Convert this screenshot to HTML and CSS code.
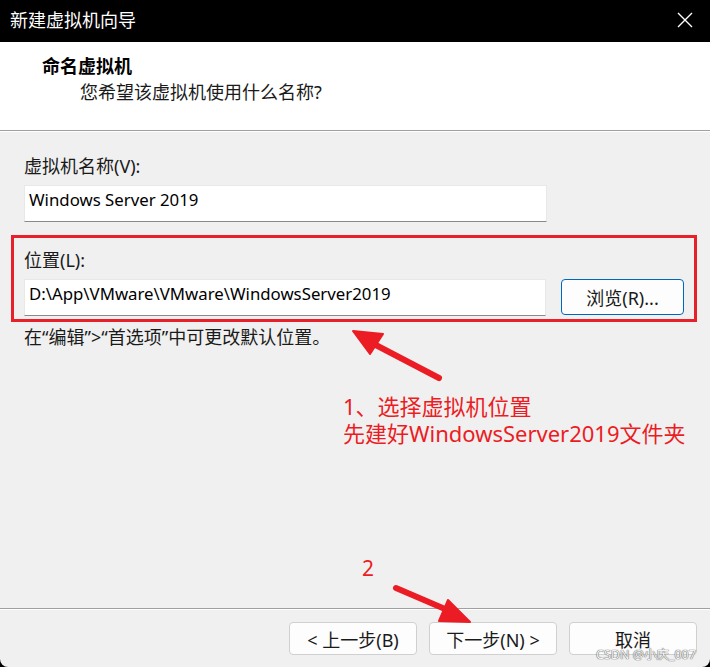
FILE: index.html
```html
<!DOCTYPE html>
<html lang="zh-CN">
<head>
  <meta charset="UTF-8">
  <title>新建虚拟机向导</title>
  <link rel="stylesheet" href="styles.css">
</head>
<body>
  <div class="window">
    <div class="titlebar">
      <span class="title">新建虚拟机向导</span>
      <svg class="close" width="16" height="16" viewBox="0 0 16 16">
        <path d="M1 1 L15 15 M15 1 L1 15" stroke="#fff" stroke-width="1.4" fill="none"/>
      </svg>
    </div>

    <div class="header">
      <div class="header-title">命名虚拟机</div>
      <div class="header-sub">您希望该虚拟机使用什么名称?</div>
    </div>

    <div class="content">
      <div class="label">虚拟机名称(V):</div>
      <div class="input name-input">Windows Server 2019</div>

      <div class="location-box">
        <div class="label">位置(L):</div>
        <div class="location-row">
          <div class="input path-input">D:\App\VMware\VMware\WindowsServer2019</div>
          <button class="btn btn-browse">浏览(R)...</button>
        </div>
      </div>

      <div class="hint">在“编辑”&gt;“首选项”中可更改默认位置。</div>
    </div>

    <div class="footer">
      <button class="btn">&lt; 上一步(B)</button>
      <button class="btn">下一步(N) &gt;</button>
      <button class="btn">取消</button>
    </div>

    <!-- annotations drawn over the dialog -->
    <div class="note">1、选择虚拟机位置<br>先建好WindowsServer2019文件夹</div>
    <div class="step">2</div>
    <svg class="arrows" width="710" height="667" viewBox="0 0 710 667">
      <g fill="#ec1c24" stroke="#ec1c24" stroke-linecap="round" stroke-linejoin="round">
        <line x1="439" y1="378" x2="370" y2="342" stroke-width="6"/>
        <polygon points="353,331 383,334 370,354" stroke-width="2"/>
        <line x1="396" y1="588" x2="452" y2="612" stroke-width="6"/>
        <polygon points="470,622 448,600 439,621" stroke-width="2"/>
      </g>
    </svg>
    <div class="watermark">CSDN @小庆_007</div>
  </div>
</body>
</html>
```

FILE: styles.css
```css
body {
  margin: 0;
  background: #000;
  font-family: "Noto Sans", "Noto Sans CJK SC", sans-serif;
  color: #000;
}

.window {
  position: relative;
  width: 710px;
  height: 667px;
  background: #f0f0f0;
  border-radius: 0 0 8px 8px;
  overflow: hidden;
}

.titlebar {
  height: 42px;
  background: #000;
  color: #fff;
  display: flex;
  align-items: center;
  justify-content: space-between;
  padding: 0 17px 0 10px;
}

.title {
  font-size: 18px;
  line-height: 24px;
  margin-top: -2px;
}

.close {
  margin-top: -3px;
}

.header {
  height: 89px;
  box-sizing: border-box;
  background: #fff;
  border-bottom: 1px solid #a0a0a0;
  padding: 11px 0 0 42px;
}

.header-title {
  font-size: 18px;
  font-weight: bold;
  line-height: 26px;
}

.header-sub {
  font-size: 18px;
  line-height: 26px;
  padding-left: 38px;
  color: #1a1a1a;
}

.content {
  height: 478px;
  box-sizing: border-box;
  border-top: 1px solid #fff;
  border-bottom: 1px solid #a0a0a0;
  padding: 22px 0 0 11px;
}

.label {
  font-size: 18px;
  line-height: 24px;
  color: #1a1a1a;
}

.content > .label,
.content > .input,
.hint {
  margin-left: 13px;
}

.input {
  height: 37px;
  box-sizing: border-box;
  background: #fff;
  border: 1px solid #e8e8e8;
  border-bottom: 1px solid #8a8a8a;
  font-size: 16.8px;
  line-height: 28px;
  padding: 0 4px;
  color: #000;
}

.name-input {
  width: 523px;
  margin-top: 7px;
}

.location-box {
  width: 686px;
  box-sizing: border-box;
  margin-top: 13px;
  border: 3px solid #e8202a;
  padding: 10px 0 3px 10px;
}

.location-row {
  display: flex;
  align-items: flex-start;
  gap: 15px;
  margin-top: 7px;
}

.path-input {
  width: 522px;
}

.btn {
  font-family: "Noto Sans", "Noto Sans CJK SC", sans-serif;
  width: 128px;
  height: 33px;
  background: #fdfdfd;
  border: 1px solid #d0d0d0;
  border-radius: 4px;
  font-size: 18px;
  color: #1a1a1a;
  padding: 0;
}

.btn-browse {
  width: 123px;
  height: 36px;
  border-color: #0067c0;
}

.hint {
  margin-top: 3px;
  font-size: 18px;
  line-height: 24px;
  color: #1a1a1a;
}

.footer {
  border-top: 1px solid #fff;
  display: flex;
  justify-content: flex-end;
  gap: 12px;
  padding: 12px 13px 0 0;
}

.note {
  position: absolute;
  left: 343px;
  top: 393px;
  font-size: 22px;
  line-height: 27px;
  color: #ec1c24;
}

.step {
  position: absolute;
  left: 362px;
  top: 555px;
  font-size: 21px;
  line-height: 27px;
  color: #ec1c24;
}

.arrows {
  position: absolute;
  left: 0;
  top: 0;
}

.watermark {
  position: absolute;
  left: 596px;
  top: 647px;
  font-size: 12.5px;
  line-height: 16px;
  color: #f4f4f4;
  text-shadow: 0 0 1px #555, 0 0 1px #555;
}
```
